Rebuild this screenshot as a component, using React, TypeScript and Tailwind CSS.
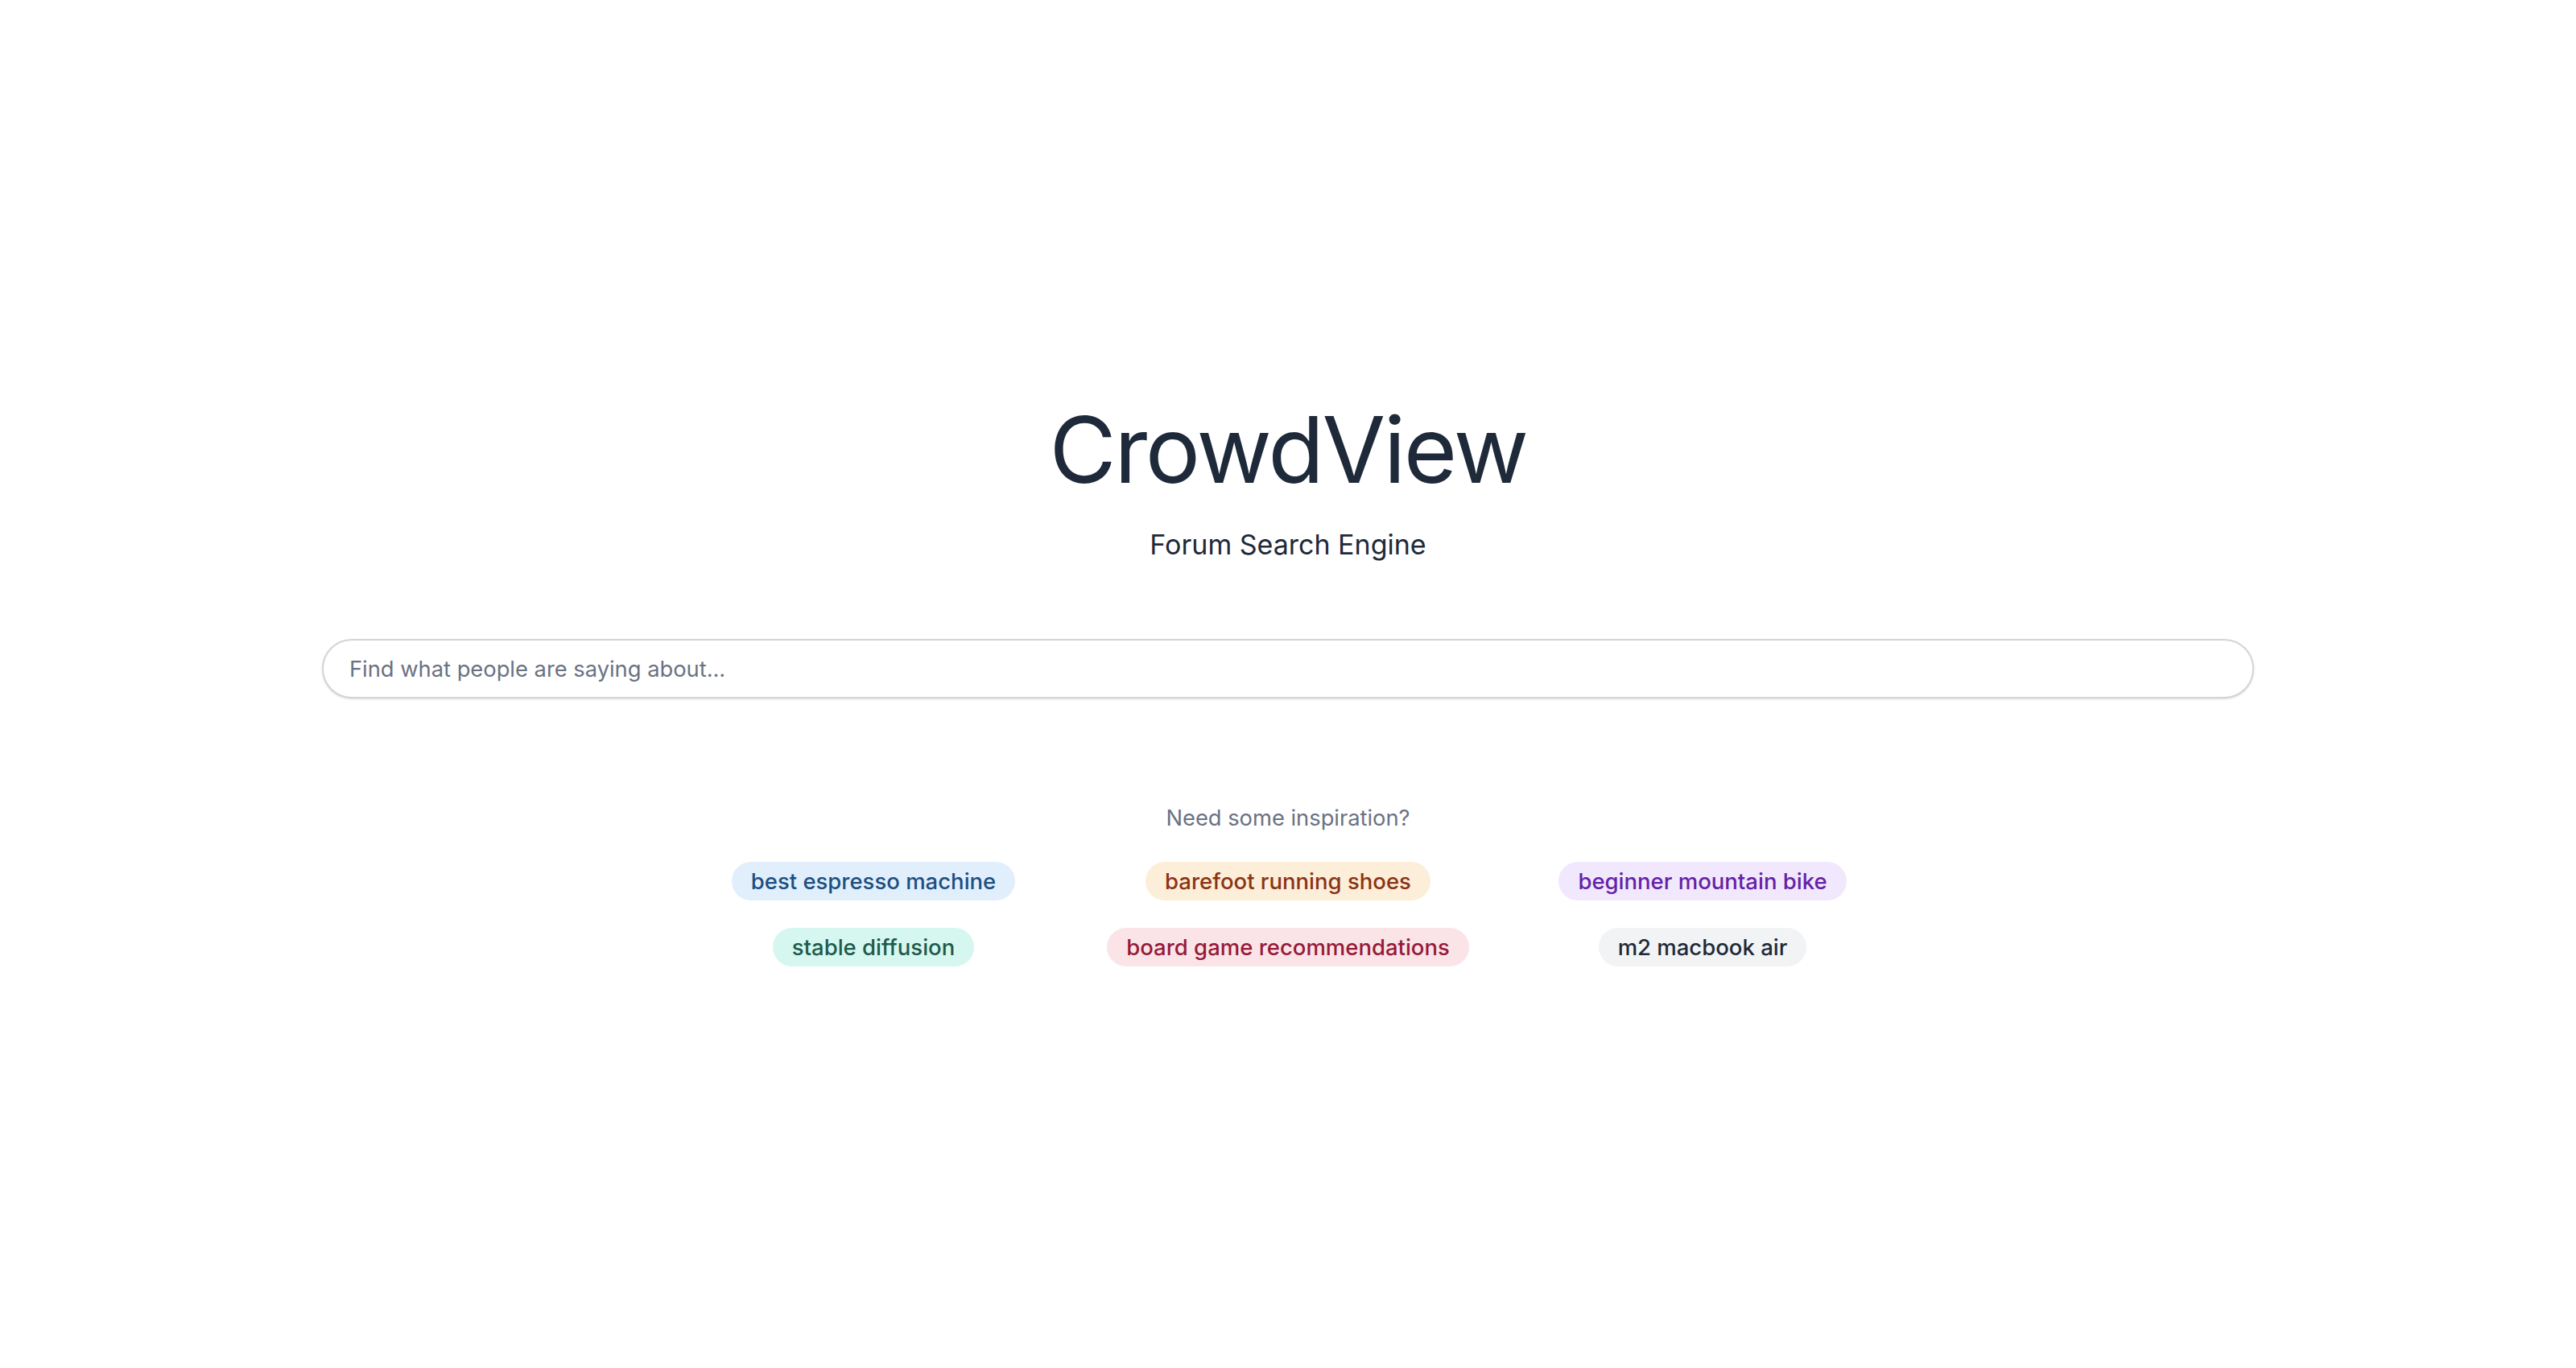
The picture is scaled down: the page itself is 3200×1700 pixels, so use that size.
const suggestions = [
  { label: "best espresso machine", cls: "bg-[#e1effc] text-[#1c4f82]" },
  { label: "barefoot running shoes", cls: "bg-[#fdeed9] text-[#8a3413]" },
  { label: "beginner mountain bike", cls: "bg-[#f1e8fd] text-[#6521a6]" },
  { label: "stable diffusion", cls: "bg-[#d5f7ef] text-[#1e5a4c]" },
  { label: "board game recommendations", cls: "bg-[#fbe4e7] text-[#961a39]" },
  { label: "m2 macbook air", cls: "bg-[#f2f3f5] text-[#1f2937]" },
];

const App = () => {
  return (
    <div
      className="min-h-screen w-full bg-white flex items-center justify-center"
      style={{ fontFamily: "Inter, 'Noto Sans', sans-serif" }}
    >
      <div className="flex flex-col items-center">
        {/* Header */}
        <h1 className="text-[114px] leading-[120px] font-normal text-gray-800 tracking-[-2.5px]">CrowdView</h1>
        <p className="mt-[30px] text-[34px] leading-[56px] text-gray-800">Forum Search Engine</p>

        {/* Search */}
        <div className="mt-[89px] w-[2400px]">
          <input
            type="text"
            placeholder="Find what people are saying about..."
            className="w-full h-[74px] rounded-full border-2 border-[#d1d5db] bg-white px-[32px] text-[27.3px] text-gray-800 placeholder:text-gray-500 shadow-sm outline-none"
          />
        </div>

        {/* Suggestions */}
        <p className="mt-[129px] text-[27.3px] leading-[40px] text-gray-500">Need some inspiration?</p>
        <div className="mt-[34px] grid grid-cols-3 w-[1545px] gap-y-[34px] justify-items-center">
          {suggestions.map((s) => (
            <button
              key={s.label}
              className={`h-[48px] rounded-full px-[24px] text-[27.5px] leading-[48px] font-medium ${s.cls}`}
            >
              {s.label}
            </button>
          ))}
        </div>
      </div>
    </div>
  );
};

export default App;
